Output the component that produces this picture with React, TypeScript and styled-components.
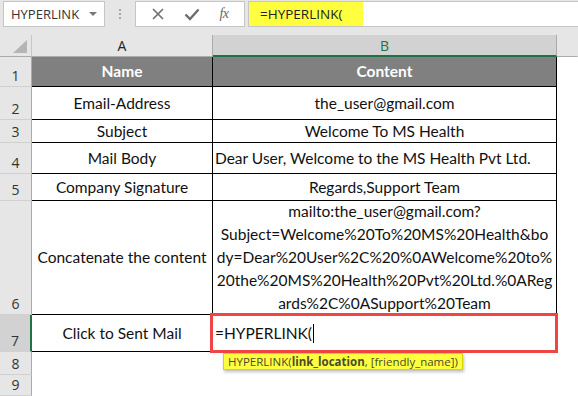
import React from "react";
import styled, { createGlobalStyle } from "styled-components";

const Global = createGlobalStyle`
  html, body { margin: 0; padding: 0; background: #ffffff; }
  body { width: 578px; height: 396px; overflow: hidden; font-family: "Lato", "Liberation Sans", sans-serif; }
  * { box-sizing: border-box; }
`;

const Page = styled.div`
  width: 578px;
  height: 396px;
  display: flex;
  flex-direction: column;
  background: #e6e6e6;
  position: relative;
`;

const FormulaBar = styled.div`
  height: 36px;
  display: flex;
  align-items: flex-start;
  padding: 1px 0 0 3px;
  background: #e6e6e6;
`;

const NameBox = styled.div`
  width: 102px;
  height: 26px;
  background: #fff;
  border: 1px solid #c6c6c6;
  display: flex;
  align-items: center;
  justify-content: space-between;
  padding: 0 7px 0 7px;
  font-family: "Open Sans", "Liberation Sans", sans-serif;
  font-size: 13px;
  color: #333;
`;

const DropArrow = styled.span`
  width: 0;
  height: 0;
  border-left: 4px solid transparent;
  border-right: 4px solid transparent;
  border-top: 4px solid #777;
`;

const Grip = styled.div`
  width: 30px;
  height: 26px;
  display: flex;
  flex-direction: column;
  align-items: center;
  justify-content: center;
  gap: 2px;
  & > span { width: 2px; height: 2px; background: #a8a8a8; }
`;

const IconBox = styled.div`
  width: 110px;
  height: 26px;
  background: #fff;
  border: 1px solid #c6c6c6;
  display: flex;
  align-items: center;
  justify-content: space-around;
  padding: 0 6px;
  color: #6d6d6d;
`;

const Fx = styled.span`
  font-family: "Liberation Serif", serif;
  font-style: italic;
  font-size: 14px;
  color: #666;
  letter-spacing: -0.5px;
`;

const FormulaInput = styled.div`
  flex: 1;
  height: 26px;
  margin-left: 3px;
  background: #fff;
  border: 1px solid #c6c6c6;
  border-right: none;
  display: flex;
`;

const Highlight = styled.div`
  width: 114px;
  height: 24px;
  background: #ffff40;
  display: flex;
  align-items: center;
  padding-left: 11px;
  font-family: "Open Sans", "Liberation Sans", sans-serif;
  font-size: 13.5px;
  color: #222;
`;

const Sheet = styled.div`
  flex: 1;
  display: grid;
  grid-template-columns: 32px 181px 344px 1fr;
  grid-template-rows: 22px 30px 33px 23px 31px 27px 114px 37px 23px 1fr;
  background: #fff;
`;

const Corner = styled.div`
  background: #e6e6e6;
  border-right: 1px solid #c6c6c6;
  border-bottom: 1px solid #ababab;
  position: relative;
  &::after {
    content: "";
    position: absolute;
    right: 4px;
    bottom: 3px;
    width: 0;
    height: 0;
    border-left: 14px solid transparent;
    border-bottom: 13px solid #b5b5b5;
  }
`;

const ColHead = styled.div<{ $active?: boolean; $empty?: boolean }>`
  background: ${(p) => (p.$active ? "#d2d2d2" : "#e6e6e6")};
  border-right: 1px solid ${(p) => (p.$empty ? "transparent" : "#ababab")};
  border-bottom: ${(p) => (p.$active ? "2px solid #217346" : "1px solid #ababab")};
  display: flex;
  align-items: center;
  justify-content: center;
  font-family: "Open Sans", "Liberation Sans", sans-serif;
  font-size: 14px;
  color: ${(p) => (p.$active ? "#217346" : "#222")};
`;

const RowHead = styled.div<{ $active?: boolean }>`
  background: ${(p) => (p.$active ? "#d2d2d2" : "#e6e6e6")};
  border-bottom: 1px solid #d0d0d0;
  border-right: ${(p) => (p.$active ? "2px solid #217346" : "1px solid #ababab")};
  display: flex;
  align-items: flex-end;
  justify-content: center;
  padding-bottom: 1px;
  font-family: "Open Sans", "Liberation Sans", sans-serif;
  font-size: 14px;
  color: #333;
`;

const Cell = styled.div<{ $head?: boolean; $align?: "left" | "center"; $firstRow?: boolean }>`
  background: ${(p) => (p.$head ? "#808080" : "#fff")};
  color: ${(p) => (p.$head ? "#fff" : "#111")};
  font-weight: ${(p) => (p.$head ? 700 : 400)};
  border-right: 1px solid #000;
  border-bottom: 1px solid #000;
  display: flex;
  flex-direction: column;
  align-items: ${(p) => (p.$align === "left" ? "flex-start" : "center")};
  justify-content: center;
  text-align: center;
  padding: ${(p) => (p.$align === "left" ? "0 0 0 2px" : "0")};
  font-size: 15.5px;
  line-height: 23px;
  white-space: nowrap;
`;

const Blank = styled.div`
  background: #fff;
`;

const EditCell = styled.div`
  border-right: 1px solid #000;
  border-bottom: 1px solid #000;
  display: flex;
  align-items: center;
  padding-left: 2px;
  font-size: 15.5px;
  color: #111;
  position: relative;
`;

const Caret = styled.span`
  display: inline-block;
  width: 1px;
  height: 19px;
  background: #000;
  margin-left: 1px;
`;

const RedFrame = styled.div`
  position: absolute;
  left: -3px;
  top: -2px;
  right: -2px;
  bottom: -2px;
  border: 3px solid #f04545;
  pointer-events: none;
`;

const Tip = styled.div`
  position: absolute;
  left: 10px;
  top: 38px;
  height: 17px;
  padding: 0 4px;
  background: #ffff40;
  border: 1px solid #d6d600;
  box-shadow: 1px 2px 3px rgba(0, 0, 0, 0.25);
  font-family: "Open Sans", "Liberation Sans", sans-serif;
  font-size: 11.5px;
  line-height: 15px;
  color: #4a4a2a;
  white-space: nowrap;
  z-index: 2;
`;

const rows: { n: number; h: number; a: React.ReactNode; b: React.ReactNode; head?: boolean; bLeft?: boolean }[] = [
  { n: 1, h: 30, a: "Name", b: "Content", head: true },
  { n: 2, h: 33, a: "Email-Address", b: "the_user@gmail.com" },
  { n: 3, h: 23, a: "Subject", b: "Welcome To MS Health" },
  { n: 4, h: 31, a: "Mail Body", b: "Dear User, Welcome to the MS Health Pvt Ltd.", bLeft: true },
  { n: 5, h: 27, a: "Company Signature", b: "Regards,Support Team" },
];

const wrapped = [
  "mailto:the_user@gmail.com?",
  "Subject=Welcome%20To%20MS%20Health&bo",
  "dy=Dear%20User%2C%20%0AWelcome%20to%",
  "20the%20MS%20Health%20Pvt%20Ltd.%0AReg",
  "ards%2C%0ASupport%20Team",
];

export default function App() {
  return (
    <Page>
      <Global />
      <FormulaBar>
        <NameBox>
          <span>HYPERLINK</span>
          <DropArrow />
        </NameBox>
        <Grip>
          <span />
          <span />
          <span />
        </Grip>
        <IconBox>
          <svg width="14" height="14" viewBox="0 0 14 14">
            <path d="M2 2 L12 12 M12 2 L2 12" stroke="#6d6d6d" strokeWidth="1.6" fill="none" />
          </svg>
          <svg width="16" height="14" viewBox="0 0 16 14">
            <path d="M1.5 7.5 L6 12 L14.5 2.5" stroke="#6d6d6d" strokeWidth="2.4" fill="none" />
          </svg>
          <Fx>fx</Fx>
        </IconBox>
        <FormulaInput>
          <Highlight>=HYPERLINK(</Highlight>
        </FormulaInput>
      </FormulaBar>
      <Sheet>
        <Corner />
        <ColHead>A</ColHead>
        <ColHead $active>B</ColHead>
        <ColHead $empty />
        {rows.map((r) => (
          <React.Fragment key={r.n}>
            <RowHead>{r.n}</RowHead>
            <Cell $head={r.head}>{r.a}</Cell>
            <Cell $head={r.head} $align={r.bLeft ? "left" : "center"}>
              {r.b}
            </Cell>
            <Blank />
          </React.Fragment>
        ))}
        <RowHead>6</RowHead>
        <Cell>Concatenate the content</Cell>
        <Cell>
          {wrapped.map((l) => (
            <span key={l}>{l}</span>
          ))}
        </Cell>
        <Blank />
        <RowHead $active>7</RowHead>
        <Cell>Click to Sent Mail</Cell>
        <EditCell>
          =HYPERLINK(
          <Caret />
          <RedFrame />
          <Tip>
            HYPERLINK(<b>link_location</b>, [friendly_name])
          </Tip>
        </EditCell>
        <Blank />
        <RowHead>8</RowHead>
        <Blank />
        <Blank />
        <Blank />
        <RowHead>9</RowHead>
        <Blank />
        <Blank />
        <Blank />
      </Sheet>
    </Page>
  );
}
